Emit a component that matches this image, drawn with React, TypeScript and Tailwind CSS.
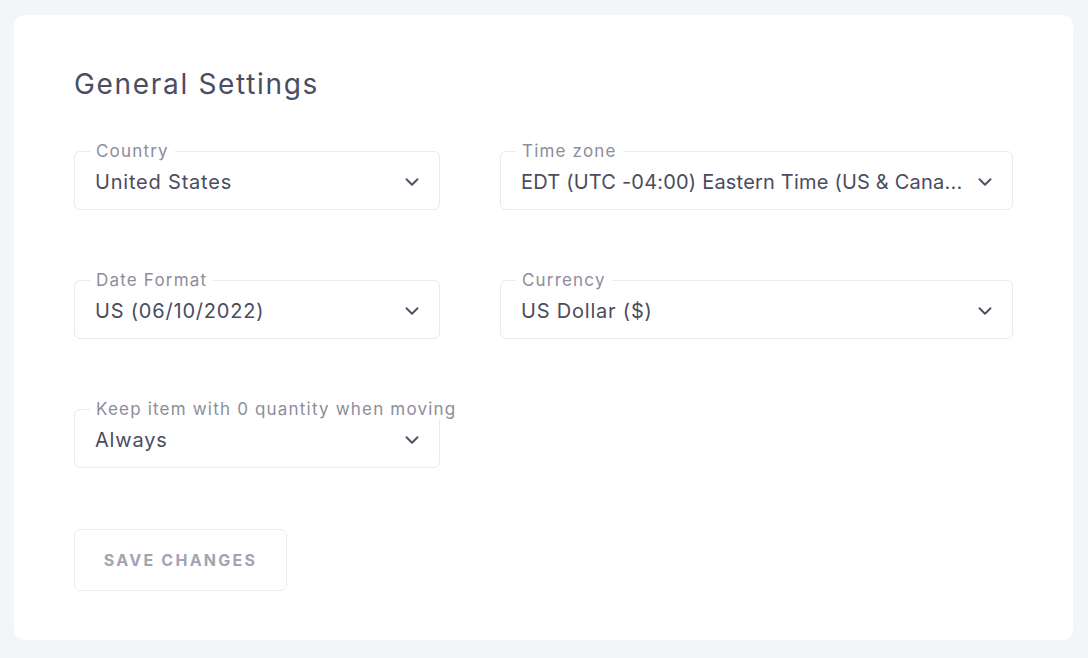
import { ChevronDown } from "lucide-react";

type FieldProps = { label: string; value: string; width: string; tight?: boolean };

function SelectField({ label, value, width, tight }: FieldProps) {
  return (
    <div className={`relative h-[59px] ${width} rounded-[6px] border border-[#e9e9ef] bg-white`}>
      <span className="absolute left-[15px] top-[-12px] whitespace-nowrap bg-white px-[6px] text-[17px] leading-[22px] tracking-[0.07em] text-[#8d8d9c]">
        {label}
      </span>
      <div className="flex h-full items-center justify-between pl-[20px] pr-[16px] pt-[2px]">
        <span className={`whitespace-nowrap text-[20px] leading-[26px] text-[#4b4c5e] ${tight ? "tracking-[0.01em]" : "tracking-[0.04em]"}`}>
          {value}
        </span>
        <ChevronDown className="ml-1 shrink-0 text-[#4f5061]" size={22} strokeWidth={2.1} />
      </div>
    </div>
  );
}

export default function App() {
  return (
    <div className="min-h-[658px] bg-[#f4f5f7] pl-[14px] pr-[15px] pt-[15px] pb-[18px]" style={{ fontFamily: "Inter, 'Open Sans', sans-serif" }}>
      <div className="rounded-[10px] bg-white pl-[60px] pr-[60px] pt-[52px] pb-[49px]">
        <h1 className="text-[28px] leading-[34px] font-normal tracking-[0.06em] text-[#4b4d63]">General Settings</h1>
        <div className="mt-[50px] flex flex-col gap-[70px]">
          <div className="flex gap-[60px]">
            <SelectField label="Country" value="United States" width="w-[366px]" />
            <SelectField label="Time zone" value="EDT (UTC -04:00) Eastern Time (US & Cana..." width="w-[513px]" tight />
          </div>
          <div className="flex gap-[60px]">
            <SelectField label="Date Format" value="US (06/10/2022)" width="w-[366px]" />
            <SelectField label="Currency" value="US Dollar ($)" width="w-[513px]" />
          </div>
          <div className="flex">
            <SelectField label="Keep item with 0 quantity when moving" value="Always" width="w-[366px]" />
          </div>
        </div>
        <button className="mt-[61px] h-[62px] w-[213px] rounded-[6px] border border-[#ececf1] bg-white text-[16px] font-bold tracking-[0.14em] text-[#a3a3b2]">
          SAVE CHANGES
        </button>
      </div>
    </div>
  );
}
